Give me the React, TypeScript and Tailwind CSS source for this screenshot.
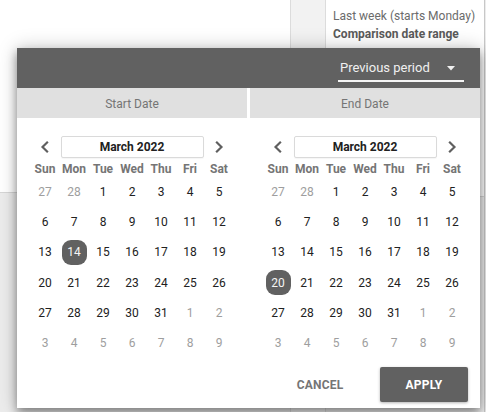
import React from "react";

type Cell = { d: number; muted?: boolean };

const weeks: Cell[][] = [
  [{ d: 27, muted: true }, { d: 28, muted: true }, { d: 1 }, { d: 2 }, { d: 3 }, { d: 4 }, { d: 5 }],
  [{ d: 6 }, { d: 7 }, { d: 8 }, { d: 9 }, { d: 10 }, { d: 11 }, { d: 12 }],
  [{ d: 13 }, { d: 14 }, { d: 15 }, { d: 16 }, { d: 17 }, { d: 18 }, { d: 19 }],
  [{ d: 20 }, { d: 21 }, { d: 22 }, { d: 23 }, { d: 24 }, { d: 25 }, { d: 26 }],
  [{ d: 27 }, { d: 28 }, { d: 29 }, { d: 30 }, { d: 31 }, { d: 1, muted: true }, { d: 2, muted: true }],
  [
    { d: 3, muted: true },
    { d: 4, muted: true },
    { d: 5, muted: true },
    { d: 6, muted: true },
    { d: 7, muted: true },
    { d: 8, muted: true },
    { d: 9, muted: true },
  ],
];

const days = ["Sun", "Mon", "Tue", "Wed", "Thu", "Fri", "Sat"];

function Chevron({ dir }: { dir: "left" | "right" }) {
  return (
    <svg width="20" height="20" viewBox="0 0 24 24" fill="none" stroke="#5f5f5f" strokeWidth="2.6" strokeLinecap="square" strokeLinejoin="miter">
      {dir === "left" ? <path d="M14.5 6.5 9 12l5.5 5.5" /> : <path d="M9.5 6.5 15 12l-5.5 5.5" />}
    </svg>
  );
}

function Calendar({ selected }: { selected: number }) {
  return (
    <div className="flex justify-center pt-[18px]">
      <div className="w-[203px]">
        <div className="grid grid-cols-7 h-[22px] items-center">
          <div className="flex justify-center items-center">
            <Chevron dir="left" />
          </div>
          <div className="col-span-5 h-[22px] mx-px border border-[#dadada] rounded-[2px] bg-white flex items-center justify-center text-[12px] font-bold text-[#212121] shadow-[0_1px_1px_rgba(0,0,0,0.04)]">
            March 2022
          </div>
          <div className="flex justify-center items-center">
            <Chevron dir="right" />
          </div>
        </div>
        <div className="grid grid-cols-7 h-[19px] items-end">
          {days.map((d) => (
            <div key={d} className="text-center text-[12px] leading-[16px] font-bold text-[#757575]">
              {d}
            </div>
          ))}
        </div>
        {weeks.map((w, i) => (
          <div key={i} className="grid grid-cols-7 h-[30.2px]">
            {w.map((c, j) => {
              const isSel = !c.muted && c.d === selected;
              return (
                <div key={j} className="flex items-center justify-center">
                  <div
                    className={
                      isSel
                        ? "w-[25px] h-[25px] rounded-[9px] bg-[#616161] text-[#f5f5f5] flex items-center justify-center text-[12px]"
                        : c.muted
                        ? "text-[12px] text-[#9e9e9e]"
                        : "text-[12px] text-[#212121]"
                    }
                  >
                    {c.d}
                  </div>
                </div>
              );
            })}
          </div>
        ))}
      </div>
    </div>
  );
}

export default function App() {
  return (
    <div
      className="relative w-[486px] h-[412px] overflow-hidden bg-[#ececec]"
      style={{ fontFamily: "Roboto, 'Liberation Sans', sans-serif" }}
    >
      {/* background page */}
      <div className="flex h-full">
        <div className="w-[290px] flex flex-col">
          <div className="h-[193px] bg-white border-b border-[#d6d6d6]" />
          <div className="flex-1 bg-[#ececec]" />
        </div>
        <div className="w-[35px] bg-[#f2f2f2] border-l border-[#dcdcdc]" />
        <div className="flex-1 flex flex-col border-l border-[#dcdcdc] border-r border-r-[#c8c8c8] mr-[1px]">
          <div className="h-[197px] bg-white border-b border-[#d6d6d6] pl-[7px] pt-[8px]">
            <div className="text-[12px] leading-[17px] text-[#6b6b6b]">Last week (starts Monday)</div>
            <div className="text-[12px] leading-[18px] font-bold text-[#5a5a5a]">Comparison date range</div>
          </div>
          <div className="flex-1 bg-[#eeeeee]" />
        </div>
      </div>

      {/* modal */}
      <div className="absolute left-[17px] top-[48px] w-[463px] h-[360px] bg-white shadow-[0_5px_9px_rgba(0,0,0,0.38),0_0_18px_rgba(0,0,0,0.22)] flex flex-col">
        <div className="h-[40px] shrink-0 bg-[#616161] flex items-center justify-end pr-[16px]">
          <div className="w-[126px] h-[26px] mt-[2px] border-b-2 border-[#f5f5f5] flex items-center justify-between pl-[2px] pr-[9px]">
            <span className="text-[13px] text-[#f0f0f0] leading-[16px]">Previous period</span>
            <svg width="8" height="5" viewBox="0 0 8 5">
              <path d="M0 0h8L4 4.5z" fill="#f0f0f0" />
            </svg>
          </div>
        </div>
        <div className="h-[30px] shrink-0 flex gap-[3px]">
          <div className="w-[230px] bg-[#e0e0e0] flex items-center justify-center pt-[1px] text-[12px] text-[#757575]">Start Date</div>
          <div className="w-[230px] bg-[#e0e0e0] flex items-center justify-center pt-[1px] text-[12px] text-[#757575]">End Date</div>
        </div>
        <div className="flex gap-[3px]">
          <div className="w-[230px]">
            <Calendar selected={14} />
          </div>
          <div className="w-[230px]">
            <Calendar selected={20} />
          </div>
        </div>
        <div className="mt-[9px] flex justify-end gap-[16px] pr-[12px]">
          <button className="w-[88px] h-[35px] text-[12px] font-bold text-[#757575] tracking-[0.2px]">CANCEL</button>
          <button className="w-[88px] h-[35px] rounded-[2px] bg-[#616161] text-[12px] font-bold text-white tracking-[0.2px] shadow-[0_1px_3px_rgba(0,0,0,0.3)]">
            APPLY
          </button>
        </div>
      </div>
    </div>
  );
}
